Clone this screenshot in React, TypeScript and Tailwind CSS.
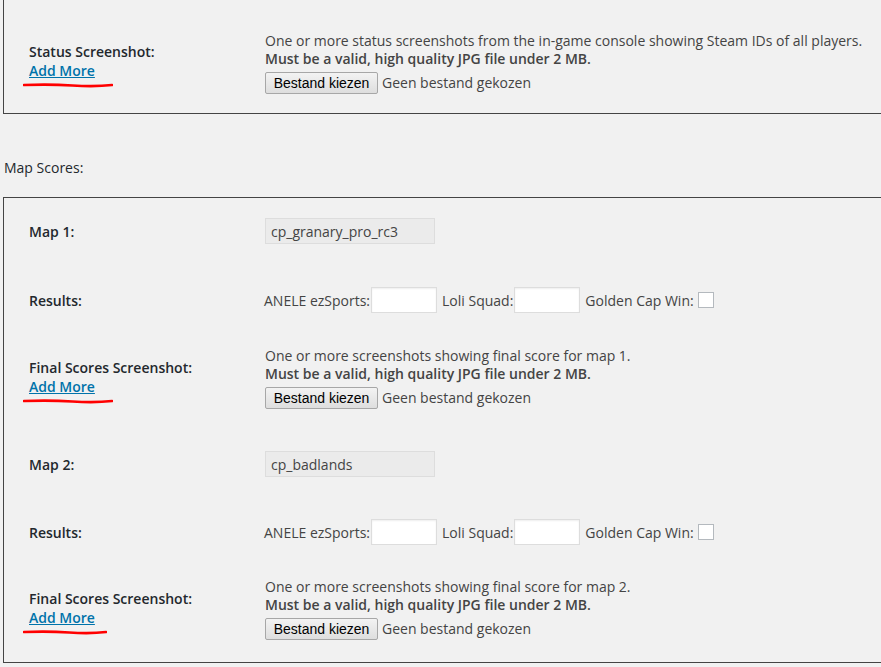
import React from "react";

const sans = "font-['Open_Sans',_'Liberation_Sans',_sans-serif]";

function Scribble({ w = 90 }: { w?: number }) {
  return (
    <svg width={w} height="6" viewBox={`0 0 ${w} 6`} className="block">
      <path
        d={`M1 3 Q ${w * 0.3} 2 ${w * 0.55} 3.5 T ${w - 1} 3`}
        stroke="#ff0000"
        strokeWidth="2.6"
        strokeLinecap="round"
        fill="none"
      />
    </svg>
  );
}

function FilePicker() {
  return (
    <div className="flex items-center gap-[4px] mt-[4px]">
      <button className="h-[22px] w-[113px] rounded-[2px] border border-[#a7a7a7] bg-gradient-to-b from-[#f3f3f3] to-[#dedede] text-[14px] leading-none text-black font-['Liberation_Sans',_Arial,_sans-serif]">
        Bestand kiezen
      </button>
      <span className="text-[14px] text-[#444]">Geen bestand gekozen</span>
    </div>
  );
}

function ScreenshotLabel({ label, lineW }: { label: string; lineW: number }) {
  return (
    <div className="flex flex-col">
      <span className="font-semibold text-[#23282d] leading-[19px]">{label}</span>
      <a href="#" className="font-semibold text-[#0073aa] underline leading-[19px] w-fit">
        Add More
      </a>
      <div className="-ml-[6px] mt-[2px] h-0 overflow-visible">
        <Scribble w={lineW} />
      </div>
    </div>
  );
}

function UploadField({ text }: { text: string }) {
  return (
    <div className="flex flex-col text-[14px] text-[#444] leading-[18px]">
      <span>{text}</span>
      <span className="font-semibold">Must be a valid, high quality JPG file under 2 MB.</span>
      <FilePicker />
    </div>
  );
}

function Row({ h, label, children }: { h: string; label: React.ReactNode; children: React.ReactNode }) {
  return (
    <div className={`grid grid-cols-[236px_1fr] items-center ${h}`}>
      <div>{label}</div>
      <div>{children}</div>
    </div>
  );
}

function Plain({ children }: { children: React.ReactNode }) {
  return <span className="font-semibold text-[#23282d]">{children}</span>;
}

function ResultsField() {
  return (
    <div className="flex items-center text-[14px] text-[#444]">
      <span className="-ml-[1px]">ANELE ezSports:</span>
      <input className="ml-[1px] w-[66px] h-[26px] bg-white border border-[#ddd] shadow-[inset_0_1px_2px_rgba(0,0,0,0.07)]" />
      <span className="ml-[5px]">Loli Squad:</span>
      <input className="ml-[1px] w-[66px] h-[26px] bg-white border border-[#ddd] shadow-[inset_0_1px_2px_rgba(0,0,0,0.07)]" />
      <span className="ml-[5px]">Golden Cap Win:</span>
      <span className="ml-[4px] w-[16px] h-[16px] bg-white border border-[#b4b9be] inline-block" />
    </div>
  );
}

function MapName({ name }: { name: string }) {
  return (
    <div className="w-[170px] h-[26px] bg-[#ebebeb] border border-[#ddd] px-[5px] flex items-center text-[14px] text-[#444]">
      {name}
    </div>
  );
}

function MapBlock({ n, name, first }: { n: number; name: string; first?: boolean }) {
  return (
    <>
      <Row h={first ? "h-[66px]" : "h-[88px]"} label={<Plain>Map {n}:</Plain>}>
        <MapName name={name} />
      </Row>
      <Row h={first ? "h-[72px]" : "h-[48px]"} label={<Plain>Results:</Plain>}>
        <ResultsField />
      </Row>
      <Row
        h={first ? "h-[84px]" : "h-[106px]"}
        label={<ScreenshotLabel label="Final Scores Screenshot:" lineW={first ? 90 : 84} />}
      >
        <UploadField text={`One or more screenshots showing final score for map ${n}.`} />
      </Row>
    </>
  );
}

export default function App() {
  return (
    <div className={`${sans} w-[881px] h-[667px] overflow-hidden bg-[#f1f1f1] text-[14px]`}>
      <div className="ml-[3px] w-[900px] border border-t-0 border-[#444] pl-[25px] pb-[19px] pt-[32px]">
        <div className="grid grid-cols-[236px_1fr] items-center">
          <div className="-mt-[3px]">
            <ScreenshotLabel label="Status Screenshot:" lineW={90} />
          </div>
          <UploadField text="One or more status screenshots from the in-game console showing Steam IDs of all players." />
        </div>
      </div>
      <div className="pl-[4px] pt-[43px] pb-[19px] text-[#23282d]">Map Scores:</div>
      <div className="ml-[3px] w-[900px] border border-[#444] pl-[25px]">
        <MapBlock n={1} name="cp_granary_pro_rc3" first />
        <MapBlock n={2} name="cp_badlands" />
      </div>
    </div>
  );
}
